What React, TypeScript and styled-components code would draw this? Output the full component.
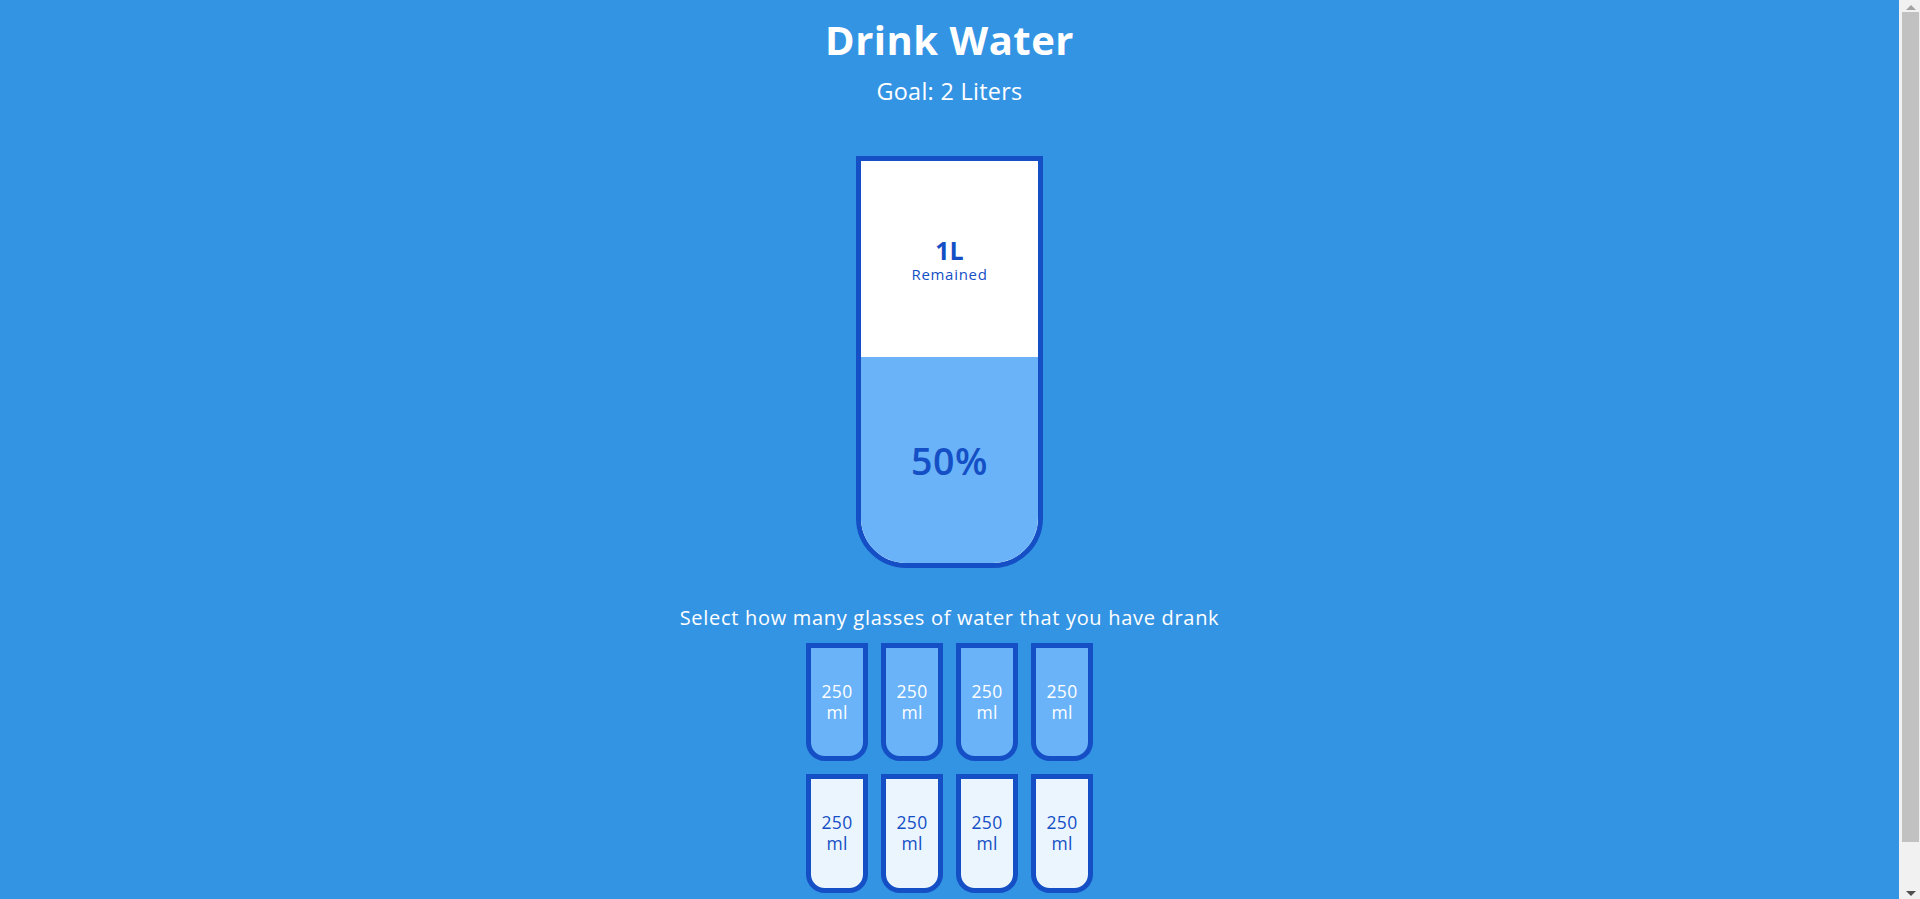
import React from "react";
import styled, { createGlobalStyle } from "styled-components";

const BORDER = "#144fc6";
const FILL = "#6ab3f8";
const TOTAL = 8;

const GlobalStyle = createGlobalStyle`
  * {
    box-sizing: border-box;
  }

  body {
    margin: 0;
    background-color: #3494e4;
    color: #fff;
    font-family: "Open Sans", "Noto Sans", sans-serif;
  }
`;

const Page = styled.div`
  display: flex;
  flex-direction: column;
  align-items: center;
  margin-right: 21px;
  padding: 16px 0 50px;
`;

const Title = styled.h1`
  margin: 0;
  font-size: 40px;
  line-height: 48.75px;
  font-weight: 700;
  letter-spacing: 0.5px;
`;

const Goal = styled.h3`
  margin: 12.5px 0;
  font-size: 23.4px;
  line-height: 28.5px;
  font-weight: 400;
  letter-spacing: 0.3px;
`;

const Cup = styled.div`
  background-color: #fff;
  border: 5px solid ${BORDER};
  color: ${BORDER};
  border-radius: 0 0 50px 50px;
  height: 412.5px;
  width: 187.5px;
  margin: 37.5px 0;
  display: flex;
  flex-direction: column;
  overflow: hidden;
`;

const Remained = styled.div`
  flex: 1;
  display: flex;
  flex-direction: column;
  align-items: center;
  justify-content: center;
  text-align: center;
`;

const Amount = styled.span`
  font-size: 25px;
  line-height: 30px;
  font-weight: 700;
`;

const Caption = styled.small`
  font-size: 15px;
  line-height: 18px;
  letter-spacing: 0.7px;
`;

const Percentage = styled.div<{ h: number }>`
  background-color: ${FILL};
  display: flex;
  align-items: center;
  justify-content: center;
  font-weight: 600;
  font-size: 37.5px;
  letter-spacing: 0.5px;
  height: ${({ h }) => h}px;
`;

const Hint = styled.p`
  margin: 0 0 6.25px;
  font-size: 20px;
  line-height: 24.4px;
  letter-spacing: 0.7px;
  text-align: center;
`;

const Cups = styled.div`
  display: flex;
  flex-wrap: wrap;
  align-items: center;
  justify-content: center;
  width: 350px;
`;

const SmallCup = styled.div<{ full: boolean }>`
  height: 118.75px;
  width: 62.5px;
  margin: 6.25px;
  border: 5px solid ${BORDER};
  border-radius: 0 0 18.75px 18.75px;
  background-color: ${({ full }) => (full ? FILL : "rgba(255, 255, 255, 0.9)")};
  color: ${({ full }) => (full ? "#fff" : BORDER)};
  font-size: 17.5px;
  line-height: 21.3px;
  letter-spacing: 0.3px;
  display: flex;
  align-items: center;
  justify-content: center;
  text-align: center;
  cursor: pointer;
  transition: 0.3s ease;
`;

// the browser's own scrollbar is hidden in the headless shot, so draw it
const Scrollbar = styled.div`
  position: fixed;
  top: 0;
  right: 0;
  bottom: 0;
  width: 21px;
  background: #f1f1f1;
  display: flex;
  flex-direction: column;
  align-items: center;
`;

const Arrow = styled.div<{ down?: boolean; dark?: boolean }>`
  width: 0;
  height: 0;
  margin: 5px 0 0 2px;
  border-left: 5px solid transparent;
  border-right: 5px solid transparent;
  ${({ down, dark }) =>
    down
      ? `border-top: 5px solid ${dark ? "#505050" : "#a3a3a3"}; margin-top: auto; margin-bottom: 3px;`
      : `border-bottom: 5px solid ${dark ? "#505050" : "#a3a3a3"};`}
`;

const Thumb = styled.div`
  width: 17px;
  margin: 2px 0 0 2px;
  height: 830px;
  background: #c1c1c1;
`;

export default function App() {
  const [filled, setFilled] = React.useState(4);

  const pick = (i: number) => {
    if (i === filled - 1) setFilled(i);
    else setFilled(i + 1);
  };

  const fillHeight = (filled / TOTAL) * 412.5;
  const litersLeft = 2 - (250 * filled) / 1000;

  return (
    <>
      <GlobalStyle />
      <Page>
        <Title>Drink Water</Title>
        <Goal>Goal: 2 Liters</Goal>
        <Cup>
          {filled < TOTAL && (
            <Remained>
              <Amount>{litersLeft}L</Amount>
              <Caption>Remained</Caption>
            </Remained>
          )}
          {filled > 0 && (
            <Percentage h={fillHeight}>{(filled / TOTAL) * 100}%</Percentage>
          )}
        </Cup>
        <Hint>Select how many glasses of water that you have drank</Hint>
        <Cups>
          {Array.from({ length: TOTAL }).map((_, i) => (
            <SmallCup key={i} full={i < filled} onClick={() => pick(i)}>
              250 ml
            </SmallCup>
          ))}
        </Cups>
      </Page>
      <Scrollbar>
        <Arrow />
        <Thumb />
        <Arrow down dark />
      </Scrollbar>
    </>
  );
}
